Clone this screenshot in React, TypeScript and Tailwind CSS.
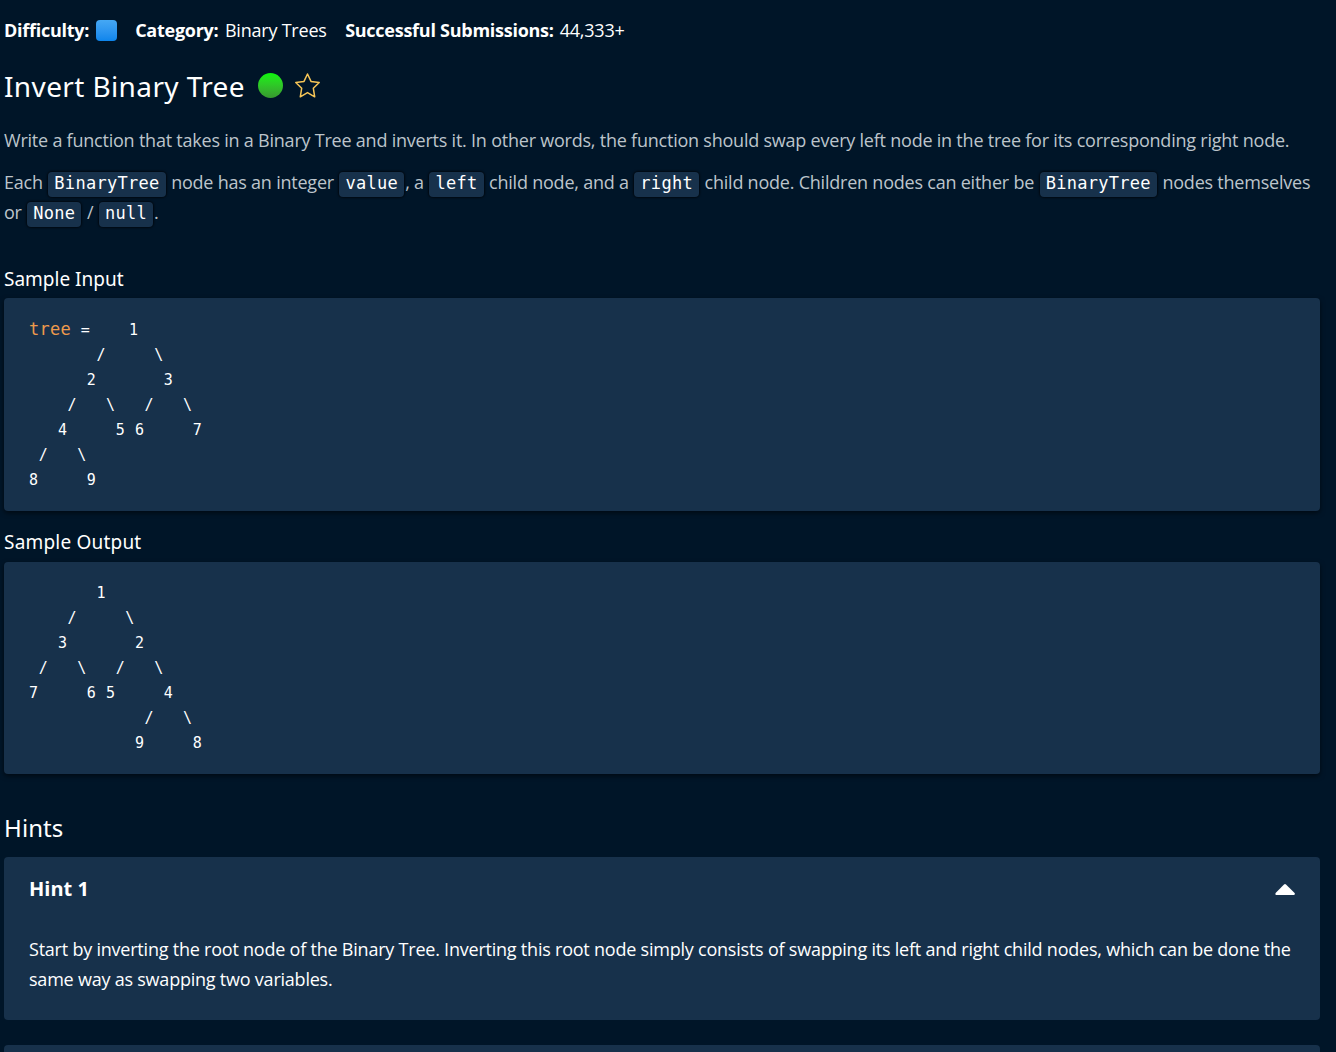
import type { ReactNode } from 'react';

const INPUT_TREE = [
  '       /     \\',
  '      2       3',
  '    /   \\   /   \\',
  '   4     5 6     7',
  ' /   \\',
  '8     9',
].join('\n');

const OUTPUT_TREE = [
  '       1',
  '    /     \\',
  '   3       2',
  ' /   \\   /   \\',
  '7     6 5     4',
  '            /   \\',
  '           9     8',
].join('\n');

function Code({ children }: { children: ReactNode }) {
  return (
    <code className="mx-[1.1px] inline-block h-[25px] rounded-[4px] bg-[#17314b] px-[6px] align-middle font-['DejaVu_Sans_Mono',monospace] text-[17px] leading-[23px] tracking-[0.29px] text-white shadow-[0_0_2px_1px_rgba(0,0,0,0.6)]">
      {children}
    </code>
  );
}

function Panel({ children }: { children: ReactNode }) {
  return (
    <pre className="rounded-[4px] bg-[#17314b] px-[25px] pb-[18px] font-['DejaVu_Sans_Mono',monospace] text-[15px] leading-[25px] tracking-[0.6px] text-white shadow-[0_2px_5px_rgba(0,0,0,0.55)] pt-[19px]">
      {children}
    </pre>
  );
}

export default function App() {
  return (
    <main className="h-[1052px] w-[1336px] overflow-hidden bg-[#001528] pr-4 pl-1 font-['Open_Sans',sans-serif] text-[18px] leading-[30px] tracking-[-0.222px] text-white">
      <div className="flex h-[60px] items-center whitespace-nowrap">
        <b className="tracking-[-0.26px]">Difficulty:</b>
        <span className="ml-[7px] size-[21px] rounded-[4px] bg-linear-to-b from-[#45a8f4] to-[#0c85ec]" />
        <b className="ml-[18px] tracking-[-0.26px]">Category:</b>
        <span className="ml-[6.5px]">Binary Trees</span>
        <b className="ml-[18.5px] tracking-[-0.26px]">Successful Submissions:</b>
        <span className="ml-[6px]">44,333+</span>
      </div>
      <div className="flex h-[52px] items-center">
        <h1 className="w-[254px] font-['Noto_Sans',sans-serif] text-[28px] tracking-[0.38px] whitespace-nowrap">Invert Binary Tree</h1>
        <span className="mb-[2px] size-[25px] rounded-full bg-linear-to-b from-[#06f606] to-[#37992f]" />
        <svg className="mb-[1px] ml-[11px] size-[27px]" viewBox="0 0 27 27" fill="none" stroke="#f7c657" strokeWidth="1.5" strokeLinejoin="round">
          <path d="M13.5 2 L17 9.4 L25.2 10.5 L19.3 16.2 L20.7 24.8 L13.5 20.6 L6.3 24.8 L7.7 16.2 L1.8 10.5 L10 9.4 Z" />
        </svg>
      </div>
      <p className="mt-[13px] whitespace-nowrap text-[#bcc4cb]">
        Write a function that takes in a Binary Tree and inverts it. In other words, the function should swap every left node in the tree for its corresponding right node.
      </p>
      <div className="mt-3 h-[60px] whitespace-nowrap text-[#bcc4cb]">
        <div className="h-[30px]">
          Each <Code>BinaryTree</Code> node has an integer <Code>value</Code>, a <Code>left</Code> child node, and a <Code>right</Code> child node. Children nodes can either be <Code>BinaryTree</Code> nodes themselves
        </div>
        <div className="h-[30px]">
          or <Code>None</Code> / <Code>null</Code>.
        </div>
      </div>
      <h3 className="mt-[37px] h-[34px] font-['Noto_Sans',sans-serif] text-[19px] tracking-[0px]">Sample Input</h3>
      <div className="rounded-[4px] bg-[#17314b] pt-px shadow-[0_2px_5px_rgba(0,0,0,0.55)]">
        <pre className="px-[25px] py-[19px] pb-[18px] font-['DejaVu_Sans_Mono',monospace] text-[15px] leading-[25px] tracking-[0.6px]">
          <span className="text-[17px] leading-none tracking-[0.29px] text-[#ed9a4c]">tree</span>
          {' =    1\n'}
          {INPUT_TREE}
        </pre>
      </div>
      <h3 className="mt-[16px] h-[35px] font-['Noto_Sans',sans-serif] text-[19px] tracking-[0.2px]">Sample Output</h3>
      <Panel>{OUTPUT_TREE}</Panel>
      <h2 className="mt-[39px] h-[44px] font-['Noto_Sans',sans-serif] text-[24px] tracking-[0.1px]">Hints</h2>
      <section className="h-[163px] rounded-[4px] bg-[#17314b] px-[25px] pt-[17px]">
        <div className="flex h-[30px] items-center justify-between">
          <b className="text-[20px] tracking-normal">Hint 1</b>
          <svg className="h-[11px] w-[20px]" viewBox="0 0 20 11" fill="white">
            <path d="M9 0.5 Q10 -0.4 11 0.5 L19.6 9 Q20.4 10.7 19 11 H1.2 Q0 10.7 0.6 9 Z" />
          </svg>
        </div>
        <p className="mt-[30px] whitespace-nowrap">
          Start by inverting the root node of the Binary Tree. Inverting this root node simply consists of swapping its left and right child nodes, which can be done the
          <br />
          same way as swapping two variables.
        </p>
      </section>
      <section className="mt-[25px] h-[60px] rounded-[4px] bg-[#17314b]" />
    </main>
  );
}
